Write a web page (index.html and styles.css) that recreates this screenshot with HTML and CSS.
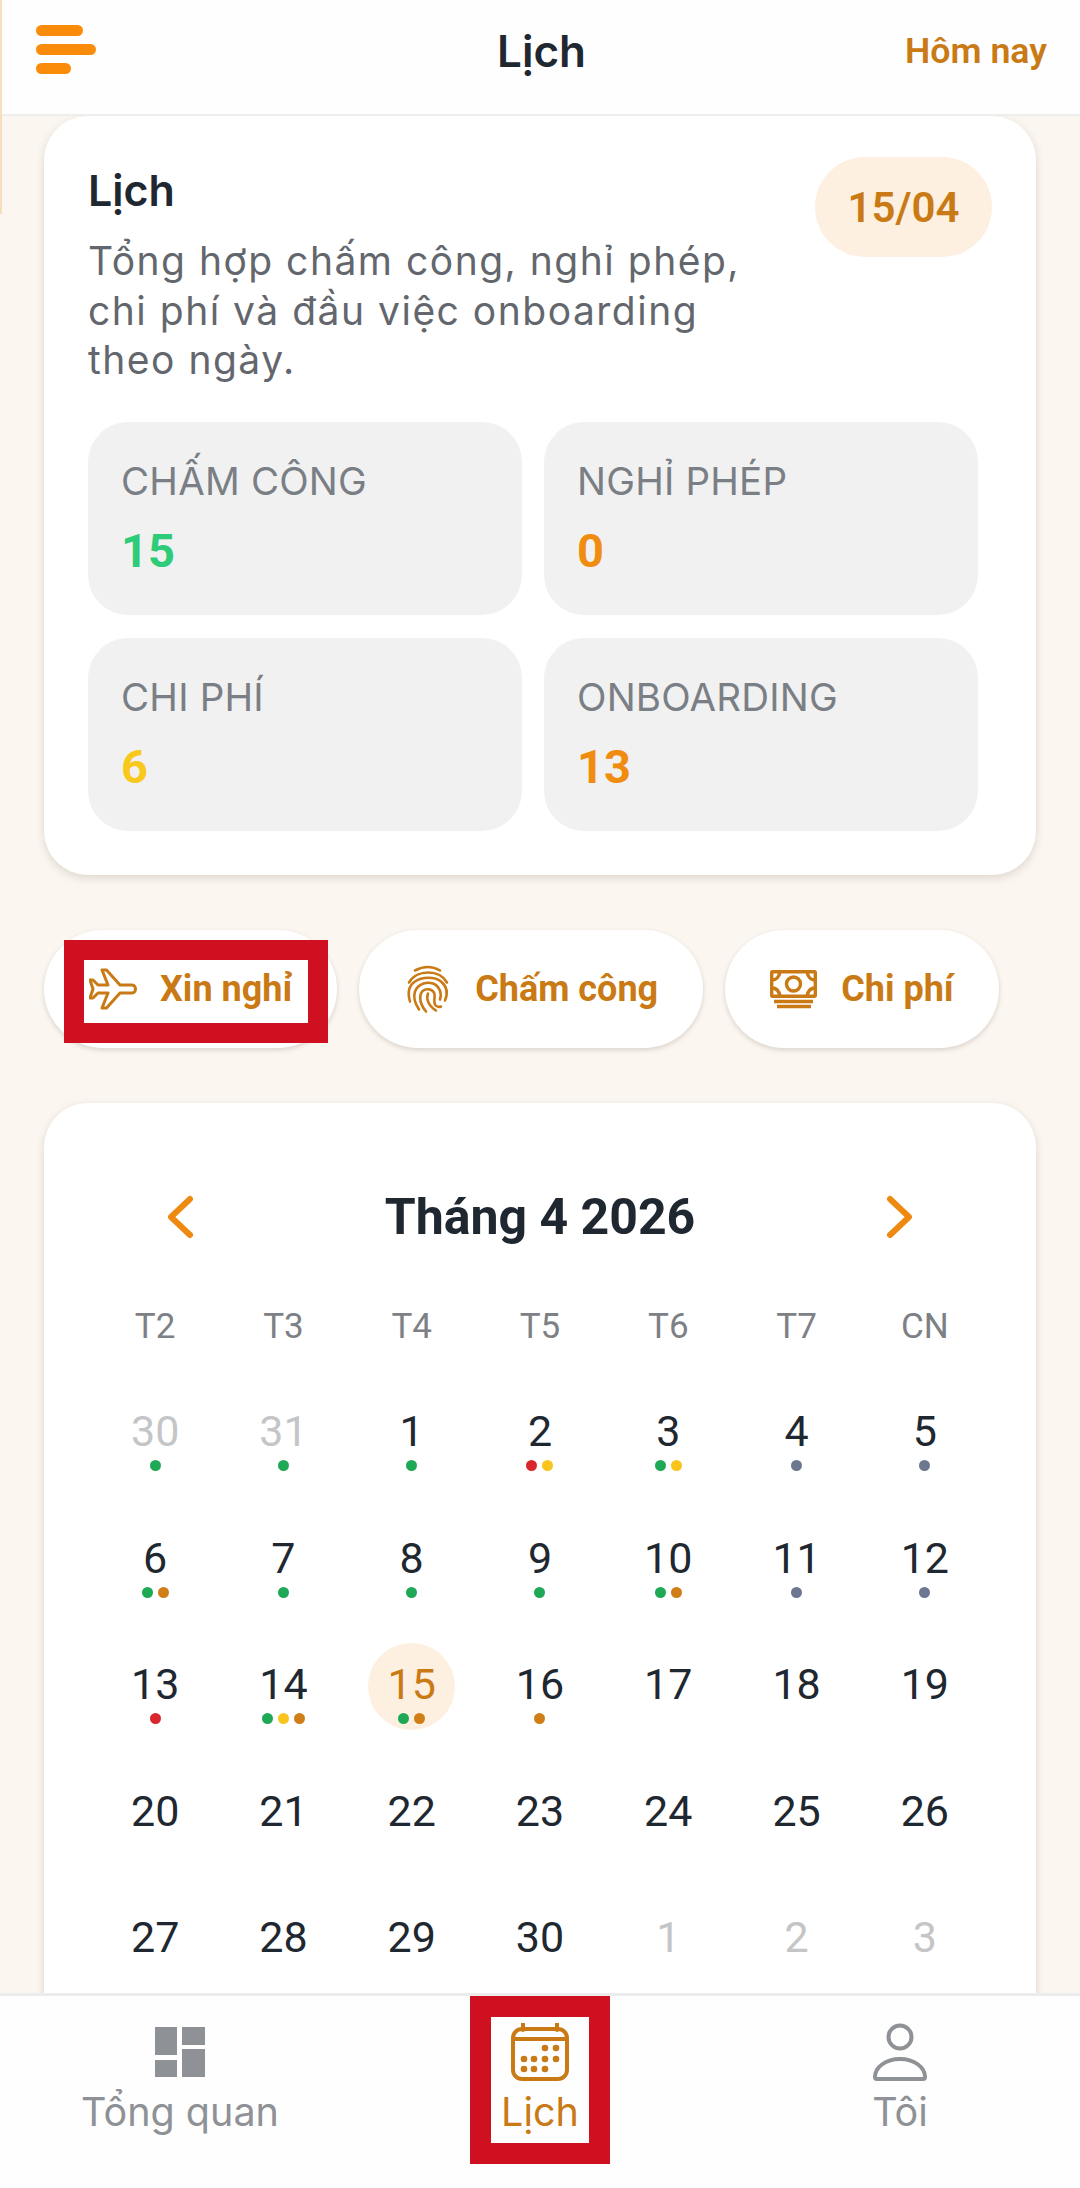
FILE: index.html
```html
<!DOCTYPE html>
<html lang="vi">
<head>
    <meta charset="UTF-8">
    <meta name="viewport" content="width=device-width, initial-scale=1.0">
    <title>Lịch</title>
    <link rel="stylesheet" href="styles.css">
</head>
<body>
    <div class="app">
        <div class="edge-line"></div>

        <header class="top-bar">
            <div class="menu-btn">
                <span class="bar bar-a"></span>
                <span class="bar bar-b"></span>
                <span class="bar bar-c"></span>
            </div>
            <div class="top-title">Lịch</div>
            <div class="top-action">Hôm nay</div>
        </header>

        <main class="scroll">
            <section class="card summary">
                <div class="summary-head">
                    <div class="summary-text">
                        <h2>Lịch</h2>
                        <p>Tổng hợp chấm công, nghỉ phép, chi phí và đầu việc onboarding theo ngày.</p>
                    </div>
                    <div class="date-pill">15/04</div>
                </div>
                <div class="stats">
                    <div class="stat"><div class="stat-label">CHẤM CÔNG</div><div class="stat-value green">15</div></div>
                    <div class="stat"><div class="stat-label">NGHỈ PHÉP</div><div class="stat-value orange">0</div></div>
                    <div class="stat"><div class="stat-label">CHI PHÍ</div><div class="stat-value yellow">6</div></div>
                    <div class="stat"><div class="stat-label">ONBOARDING</div><div class="stat-value orange">13</div></div>
                </div>
            </section>

            <div class="actions">
                <button class="action">
                    <span class="mark mark-action"></span>
                    <svg class="action-icon" viewBox="0 -4 48 48" fill="none" stroke="currentColor" stroke-width="3" stroke-linejoin="round">
                        <path d="M13 1h4.500L31 16h12c2.500 0 3.500 2.500 3.500 4s-1 4-3.500 4H31L17.500 39H13l6-15H9l-5 5H1l3-9-3-9h3l5 5h10z"/>
                    </svg>
                    Xin nghỉ
                </button>
                <button class="action">
                    <svg class="action-icon" viewBox="9 9.500 48 48" fill="none" stroke="currentColor" stroke-width="2.600" stroke-linecap="round">
                        <path d="M20 15Q33 8 45 15"/>
                        <path d="M14 27C18 20 26 17 33 17C41 17 48 20 52 27"/>
                        <path d="M15 46C12 36 14 30 20 26C27 21 40 21 46 26C52 31 53 38 50 45"/>
                        <path d="M24 54C20 48 18 42 20 36C23 28 32 26 38 28C45 31 47 38 45 44"/>
                        <path d="M31 56C26 50 24 44 26 38C28 33 36 32 39 37C41 41 38 44 40 49C41 51 44 52 46 51"/>
                        <path d="M33 38C31 43 33 50 41 55"/>
                    </svg>
                    Chấm công
                </button>
                <button class="action">
                    <svg class="action-icon" viewBox="0 -5 48 48" fill="none" stroke="currentColor" stroke-width="3.400">
                        <rect x="1.700" y="1.700" width="43.600" height="24.600" rx="1"/>
                        <circle cx="23.500" cy="14" r="7"/>
                        <path d="M2 10c4 0 7-3 8-8M37 2c1 5 4 8 8 8M2 18c4 0 7 3 8 8M37 26c1-5 4-8 8-8"/>
                        <path d="M4 31.500h39M7 36.500h34"/>
                    </svg>
                    Chi phí
                </button>
            </div>

            <section class="card calendar">
                <div class="cal-head">
                    <svg class="chev" viewBox="0 0 30 44" fill="none" stroke="currentColor" stroke-width="6" stroke-linecap="round" stroke-linejoin="round"><path d="M26 4L7 22l19 18"/></svg>
                    <div class="cal-title">Tháng 4 2026</div>
                    <svg class="chev" viewBox="0 0 30 44" fill="none" stroke="currentColor" stroke-width="6" stroke-linecap="round" stroke-linejoin="round"><path d="M4 4l19 18L4 40"/></svg>
                </div>
                <div class="week">
                    <span>T2</span><span>T3</span><span>T4</span><span>T5</span><span>T6</span><span>T7</span><span>CN</span>
                </div>
                <div class="days" id="days"></div>
            </section>
        </main>

        <nav class="bottom-nav">
            <div class="nav-item">
                <svg class="nav-icon" viewBox="-4 -4 58 58" fill="currentColor">
                    <rect x="0" y="0" width="22" height="28"/>
                    <rect x="0" y="33" width="22" height="17"/>
                    <rect x="27" y="0" width="23" height="18"/>
                    <rect x="27" y="22" width="23" height="28"/>
                </svg>
                <span>Tổng quan</span>
            </div>
            <div class="nav-item active">
                <span class="mark mark-nav"></span>
                <svg class="nav-icon" viewBox="0 0 58 58" fill="none" stroke="currentColor" stroke-width="4">
                    <rect x="2" y="6" width="54" height="50" rx="9"/>
                    <path d="M12 1v6M46 1v6" stroke-linecap="round"/>
                    <path d="M2 16h54"/>
                    <g fill="currentColor" stroke="none">
                        <circle cx="34" cy="25" r="3.300"/><circle cx="45" cy="25" r="3.300"/>
                        <circle cx="13" cy="36" r="3.300"/><circle cx="23" cy="36" r="3.300"/><circle cx="34" cy="36" r="3.300"/><circle cx="45" cy="36" r="3.300"/>
                        <circle cx="13" cy="46" r="3.300"/><circle cx="23" cy="46" r="3.300"/><circle cx="34" cy="46" r="3.300"/>
                    </g>
                </svg>
                <span>Lịch</span>
            </div>
            <div class="nav-item">
                <svg class="nav-icon" viewBox="0 0 54 58" fill="none" stroke="currentColor" stroke-width="4" stroke-linejoin="round">
                    <circle cx="27" cy="14" r="11.500"/>
                    <path d="M4 56h46a2 2 0 0 0 2-2C52 44 41 36 27 36S2 44 2 54a2 2 0 0 0 2 2z"/>
                </svg>
                <span>Tôi</span>
            </div>
        </nav>
    </div>

    <script>
        // g = green, r = red, y = yellow, o = orange, s = slate
        const days = [
            [30, 'g', 1], [31, 'g', 1], [1, 'g'], [2, 'ry'], [3, 'gy'], [4, 's'], [5, 's'],
            [6, 'go'], [7, 'g'], [8, 'g'], [9, 'g'], [10, 'go'], [11, 's'], [12, 's'],
            [13, 'r'], [14, 'gyo'], [15, 'go'], [16, 'o'], [17, ''], [18, ''], [19, ''],
            [20, ''], [21, ''], [22, ''], [23, ''], [24, ''], [25, ''], [26, ''],
            [27, ''], [28, ''], [29, ''], [30, ''], [1, '', 1], [2, '', 1], [3, '', 1]
        ];
        const box = document.getElementById('days');
        days.forEach(([num, dots, muted]) => {
            const cell = document.createElement('div');
            cell.className = 'day' + (muted ? ' muted' : '') + (num === 15 ? ' today' : '');
            const dotHtml = dots.split('').map(d => `<i class="dot dot-${d}"></i>`).join('');
            cell.innerHTML = `<span class="num">${num}</span><span class="dots">${dotHtml}</span>`;
            box.appendChild(cell);
        });
    </script>
</body>
</html>
```

FILE: styles.css
```css
* {
    box-sizing: border-box;
}
body {
    margin: 0;
    background: #fbf6f0;
    font-family: Roboto, "Liberation Sans", sans-serif;
    color: #1f2730;
}
.app {
    position: relative;
    width: 1080px;
    height: 2188px;
    display: flex;
    flex-direction: column;
    overflow: hidden;
}
.edge-line {
    position: absolute;
    left: 0;
    top: 0;
    width: 2px;
    height: 214px;
    background: #f6dfbd;
    z-index: 5;
}

/* top bar */
.top-bar {
    height: 116px;
    flex: none;
    display: grid;
    grid-template-columns: 1fr auto 1fr;
    align-items: center;
    padding: 0 33px 0 36px;
    background: #fefefe;
    border-bottom: 2px solid #eeeeec;
    position: relative;
    z-index: 2;
}
.menu-btn {
    display: flex;
    flex-direction: column;
    gap: 8px;
    margin-top: -16px;
}
.bar {
    display: block;
    height: 11px;
    border-radius: 6px;
    background: #fb8c0a;
}
.bar-a { width: 47px; }
.bar-b { width: 60px; }
.bar-c { width: 35px; }
.top-title {
    font-family: Inter, sans-serif;
    font-size: 44px;
    font-weight: 600;
    margin-top: -12px;
}
.top-action {
    justify-self: end;
    font-size: 35.700px;
    font-weight: 600;
    color: #c97a15;
    margin-top: -12px;
}

/* scrolling content */
.scroll {
    flex: 1;
    min-height: 0;
    overflow: hidden;
    padding: 0 44px;
}
.card {
    background: #fff;
    border-radius: 44px;
    box-shadow: 0 3px 8px rgba(90, 70, 50, 0.18);
}
.summary {
    height: 759px;
    padding: 46px 44px 0;
}
.summary-head {
    display: flex;
    justify-content: space-between;
    align-items: flex-start;
}
.summary-text {
    width: 670px;
}
.summary-text h2 {
    margin: 0 0 18px;
    font-family: Inter, sans-serif;
    font-size: 43px;
    font-weight: 600;
    line-height: 56px;
}
.summary-text p {
    margin: 0;
    font-family: Inter, sans-serif;
    font-size: 39px;
    line-height: 49.500px;
    letter-spacing: 1.500px;
    color: #63676d;
}
.date-pill {
    width: 177px;
    height: 100px;
    margin-top: -5px;
    border-radius: 50px;
    background: #fdf0e0;
    color: #c97a15;
    font-size: 42px;
    font-weight: 600;
    display: flex;
    align-items: center;
    justify-content: center;
}
.stats {
    display: grid;
    grid-template-columns: 434px 434px;
    grid-auto-rows: 193px;
    gap: 23px 22px;
    margin-top: 37px;
}
.stat {
    background: #f1f1f1;
    border-radius: 40px;
    padding: 36px 33px 0;
}
.stat-label {
    font-family: Inter, sans-serif;
    font-size: 38.500px;
    line-height: 46px;
    letter-spacing: 0.200px;
    color: #7a7f85;
}
.stat-value {
    font-size: 47px;
    font-weight: 700;
    line-height: 54px;
    margin-top: 20px;
}
.green { color: #2ecb78; }
.orange { color: #f08c10; }
.yellow { color: #f8c91c; }

/* quick actions */
.actions {
    display: flex;
    gap: 22px;
    margin: 55px 0;
}
.action {
    position: relative;
    height: 118px;
    padding: 0 45px;
    display: flex;
    align-items: center;
    gap: 23px;
    border: none;
    border-radius: 59px;
    background: #fff;
    box-shadow: 0 2px 5px rgba(90, 70, 50, 0.2);
    color: #c97a15;
    font-family: Roboto, sans-serif;
    font-size: 36px;
    font-weight: 700;
    white-space: nowrap;
}
.action-icon {
    width: 48px;
    height: 48px;
    flex: none;
}
.mark {
    position: absolute;
    border: 20px solid #cf1020;
    z-index: 3;
}
.mark-action {
    left: 20px;
    top: 10px;
    width: 264px;
    height: 103px;
}
.mark-nav {
    left: 110px;
    top: 0;
    width: 140px;
    height: 168px;
    border-width: 21px;
}

/* calendar */
.calendar {
    height: 1000px;
    padding: 0 47px;
}
.cal-head {
    height: 228px;
    padding: 0 73px;
    display: flex;
    align-items: center;
    justify-content: space-between;
    color: #ee8a12;
}
.chev {
    width: 30px;
    height: 44px;
}
.cal-title {
    font-size: 50px;
    font-weight: 700;
    color: #1f2730;
}
.week {
    display: grid;
    grid-template-columns: repeat(7, 1fr);
    margin-top: -24px;
    text-align: center;
    font-size: 35px;
    line-height: 40px;
    color: #7d8085;
}
.days {
    display: grid;
    grid-template-columns: repeat(7, 1fr);
    grid-auto-rows: 126.500px;
    margin-top: 44px;
}
.day {
    position: relative;
    display: flex;
    flex-direction: column;
    align-items: center;
    font-size: 43px;
    line-height: 50px;
    padding-top: 15px;
}
.day.muted {
    color: #c4c5c7;
}
.day.today {
    color: #c97a15;
}
.day.today::before {
    content: "";
    position: absolute;
    left: 50%;
    top: -1px;
    width: 87px;
    height: 87px;
    margin-left: -44px;
    border-radius: 50%;
    background: #fdf0e0;
    z-index: 0;
}
.num,
.dots {
    position: relative;
}
.dots {
    display: flex;
    gap: 5px;
    height: 11px;
    margin-top: 4px;
}
.dot {
    width: 11px;
    height: 11px;
    border-radius: 50%;
}
.dot-g { background: #1fa855; }
.dot-r { background: #d9262e; }
.dot-y { background: #f9c51d; }
.dot-o { background: #d07e18; }
.dot-s { background: #6b7890; }

/* bottom nav */
.bottom-nav {
    position: absolute;
    left: 0;
    right: 0;
    bottom: 0;
    height: 195px;
    display: grid;
    grid-template-columns: repeat(3, 1fr);
    background: #fefefe;
    border-top: 3px solid #ececec;
    z-index: 4;
}
.nav-item {
    position: relative;
    display: flex;
    flex-direction: column;
    align-items: center;
    padding-top: 27px;
    color: #8e9195;
    font-family: Inter, sans-serif;
    font-size: 39.500px;
    line-height: 48px;
}
.nav-item.active {
    color: #c97a15;
}
.nav-icon {
    width: 58px;
    height: 58px;
    margin-bottom: 7px;
}
```
